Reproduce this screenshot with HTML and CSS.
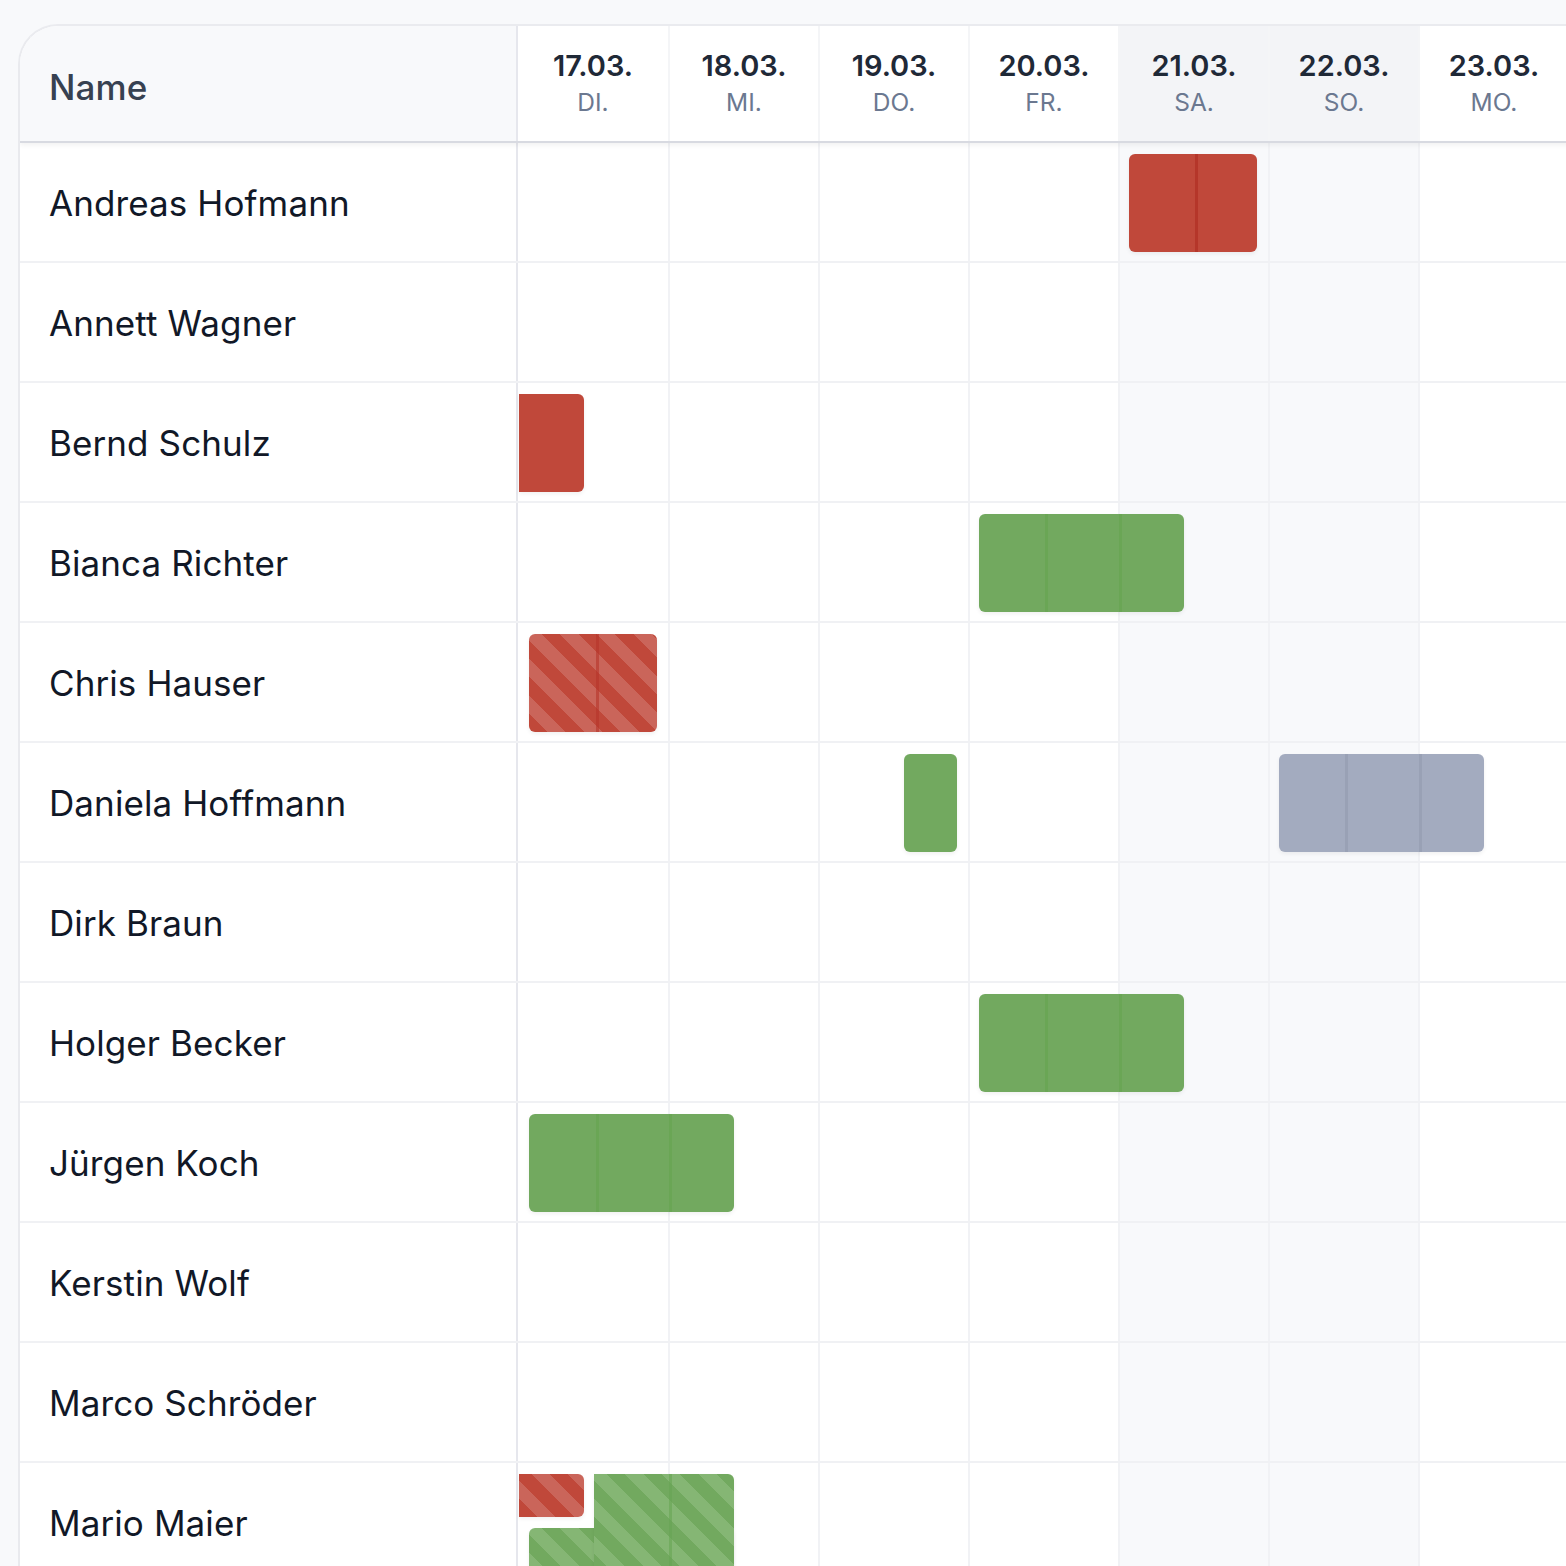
FILE: index.html
```html
<!DOCTYPE html>
<html lang="de">

<head>
    <meta charset="UTF-8">
    <meta name="viewport" content="width=device-width, initial-scale=1.0">
    <title>Abwesenheiten</title>
    <link rel="stylesheet" href="styles.css">
</head>

<body>
    <div class="planner">
        <div class="row head">
            <div class="name-cell">Name</div>
            <div class="day"><span class="date">17.03.</span><span class="wd">DI.</span></div>
            <div class="day"><span class="date">18.03.</span><span class="wd">MI.</span></div>
            <div class="day"><span class="date">19.03.</span><span class="wd">DO.</span></div>
            <div class="day"><span class="date">20.03.</span><span class="wd">FR.</span></div>
            <div class="day weekend"><span class="date">21.03.</span><span class="wd">SA.</span></div>
            <div class="day weekend"><span class="date">22.03.</span><span class="wd">SO.</span></div>
            <div class="day"><span class="date">23.03.</span><span class="wd">MO.</span></div>
        </div>
        <div id="body"></div>
    </div>

    <script>
        // left / width in px from the start of the timeline, splits = half-day marks inside the bar
        const people = [
            { name: 'Andreas Hofmann', bars: [{ type: 'sick', left: 611, width: 128, splits: [66] }] },
            { name: 'Annett Wagner', bars: [] },
            { name: 'Bernd Schulz', bars: [{ type: 'sick open', left: 1, width: 65, splits: [] }] },
            { name: 'Bianca Richter', bars: [{ type: 'vacation', left: 461, width: 205, splits: [66, 140] }] },
            { name: 'Chris Hauser', bars: [{ type: 'sick striped', left: 11, width: 128, splits: [67] }] },
            {
                name: 'Daniela Hoffmann', bars: [
                    { type: 'vacation', left: 386, width: 53, splits: [] },
                    { type: 'other', left: 761, width: 205, splits: [66, 140] }
                ]
            },
            { name: 'Dirk Braun', bars: [] },
            { name: 'Holger Becker', bars: [{ type: 'vacation', left: 461, width: 205, splits: [66, 140] }] },
            { name: 'Jürgen Koch', bars: [{ type: 'vacation', left: 11, width: 205, splits: [67, 140] }] },
            { name: 'Kerstin Wolf', bars: [] },
            { name: 'Marco Schröder', bars: [] },
            {
                name: 'Mario Maier', bars: [
                    { type: 'sick striped open short', left: 1, width: 65, splits: [] },
                    { type: 'vacation striped low', left: 11, width: 205, splits: [65, 140] },
                    { type: 'vacation striped open', left: 76, width: 140, splits: [75] }
                ]
            }
        ];

        const weekend = [4, 5];
        const body = document.getElementById('body');

        people.forEach(function (p) {
            const row = document.createElement('div');
            row.className = 'row';

            const name = document.createElement('div');
            name.className = 'name-cell';
            name.textContent = p.name;
            row.appendChild(name);

            for (let i = 0; i < 7; i++) {
                const cell = document.createElement('div');
                cell.className = weekend.includes(i) ? 'day weekend' : 'day';
                row.appendChild(cell);
            }

            const track = document.createElement('div');
            track.className = 'track';
            p.bars.forEach(function (b) {
                const bar = document.createElement('div');
                bar.className = 'bar ' + b.type;
                bar.style.left = b.left + 'px';
                bar.style.width = b.width + 'px';
                b.splits.forEach(function (s) {
                    const line = document.createElement('span');
                    line.className = 'split';
                    line.style.left = s + 'px';
                    bar.appendChild(line);
                });
                track.appendChild(bar);
            });
            row.appendChild(track);

            body.appendChild(row);
        });
    </script>
</body>

</html>
```

FILE: styles.css
```css
body {
    margin: 0;
    background-color: #f8f9fb;
    font-family: Inter, "Noto Sans", sans-serif;
    color: #111827;
    overflow: hidden;
}

.planner {
    margin: 24px 0 0 18px;
    width: 1550px;
    background: #fff;
    border-top: 2px solid #eaebef;
    border-left: 2px solid #e9eaee;
    border-top-left-radius: 40px;
    overflow: hidden;
}

.row {
    display: grid;
    grid-template-columns: 498px repeat(7, 150px);
    height: 120px;
    border-bottom: 2px solid #f0f1f4;
    box-sizing: border-box;
    position: relative;
}

.row.head {
    height: 117px;
    border-bottom: 2px solid #d8dae1;
    box-shadow: 0 2px 5px rgba(0, 0, 0, 0.06);
    z-index: 2;
}

.name-cell {
    display: flex;
    align-items: center;
    padding-left: 29px;
    padding-top: 2px;
    border-right: 2px solid #e6e7ed;
    font-size: 35px;
    letter-spacing: 0.1px;
}

.head .name-cell {
    background: #f8f9fb;
    color: #374151;
    font-weight: 500;
    padding-top: 7px;
}

.day {
    border-left: 2px solid #f1f2f5;
}

.name-cell + .day {
    border-left: none;
}

.day.weekend {
    background: #f8f9fb;
}

.head .day {
    display: flex;
    flex-direction: column;
    align-items: center;
    justify-content: center;
    border-left-color: #f4f5f7;
}

.head .day.weekend {
    background: #f3f4f7;
}

.date {
    font-size: 29px;
    font-weight: 600;
    color: #1f2937;
    line-height: 36px;
}

.wd {
    font-size: 24.5px;
    color: #6b7890;
    line-height: 36px;
}

/* bars lie over the day cells */
.track {
    position: absolute;
    top: 0;
    bottom: 0;
    left: 498px;
    right: 0;
}

.bar {
    position: absolute;
    top: 11px;
    height: 98px;
    border-radius: 6px;
    box-shadow: 0 2px 4px rgba(0, 0, 0, 0.06);
}

.split {
    position: absolute;
    top: 0;
    bottom: 0;
    width: 3px;
}

.sick {
    background: #c0483a;
}

.sick .split {
    background: #b5362a;
}

.vacation {
    background: #72a95f;
}

.vacation .split {
    background: #68a553;
    opacity: 0.8;
}

.other {
    background: #a3abbf;
}

.other .split {
    background: #99a1b5;
}

.sick.striped {
    background: repeating-linear-gradient(45deg, #c0483a 0 13px, #ca655a 13px 26px);
}

.vacation.striped {
    background: repeating-linear-gradient(45deg, #72a95f 0 13px, #85b674 13px 26px);
}

.striped .split {
    opacity: 0.6;
}

.open {
    border-top-left-radius: 0;
    border-bottom-left-radius: 0;
}

.short {
    height: 43px;
}

.low {
    top: 65px;
}
```
